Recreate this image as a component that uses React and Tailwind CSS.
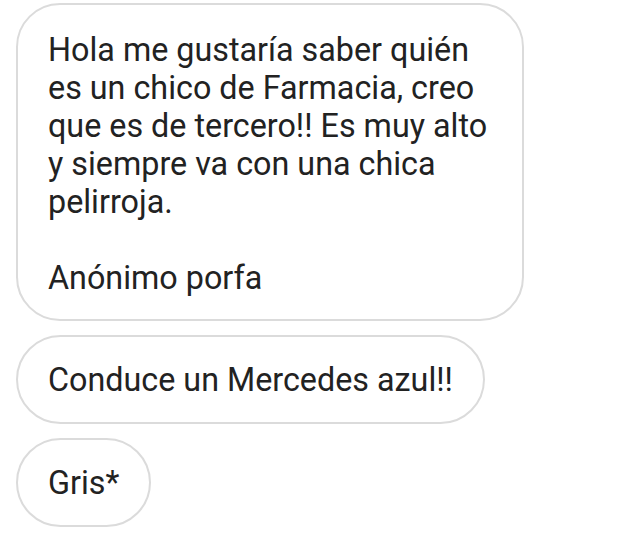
import React from 'react';

const messages = [
    {
        id: 1,
        lines: [
            'Hola me gustaría saber quién',
            'es un chico de Farmacia, creo',
            'que es de tercero!! Es muy alto',
            'y siempre va con una chica',
            'pelirroja.',
            '',
            'Anónimo porfa',
        ],
    },
    { id: 2, lines: ['Conduce un Mercedes azul!!'] },
    { id: 3, lines: ['Gris*'] },
];

const Bubble = ({ lines }) => {
    const multi = lines.length > 1;
    return (
        <div
            className={`self-start bg-white border-2 border-[#dbdbdb] text-[#222222] ${
                multi ? 'rounded-[44px] pl-[30px] pr-[16px] pt-[26px] pb-[22px] w-[508px]' : 'rounded-[45px] px-[30px] h-[89px] flex items-center'
            }`}
        >
            <p className="whitespace-pre-line">{lines.join('\n')}</p>
        </div>
    );
};

export default function App() {
    return (
        <div
            className="min-h-screen bg-white flex flex-col gap-[14px] pl-[16px] pt-[3px] text-[32.3px] leading-[38px]"
            style={{ fontFamily: 'Roboto, "Noto Sans", sans-serif' }}
        >
            {messages.map((m) => (
                <Bubble key={m.id} lines={m.lines} />
            ))}
        </div>
    );
}
